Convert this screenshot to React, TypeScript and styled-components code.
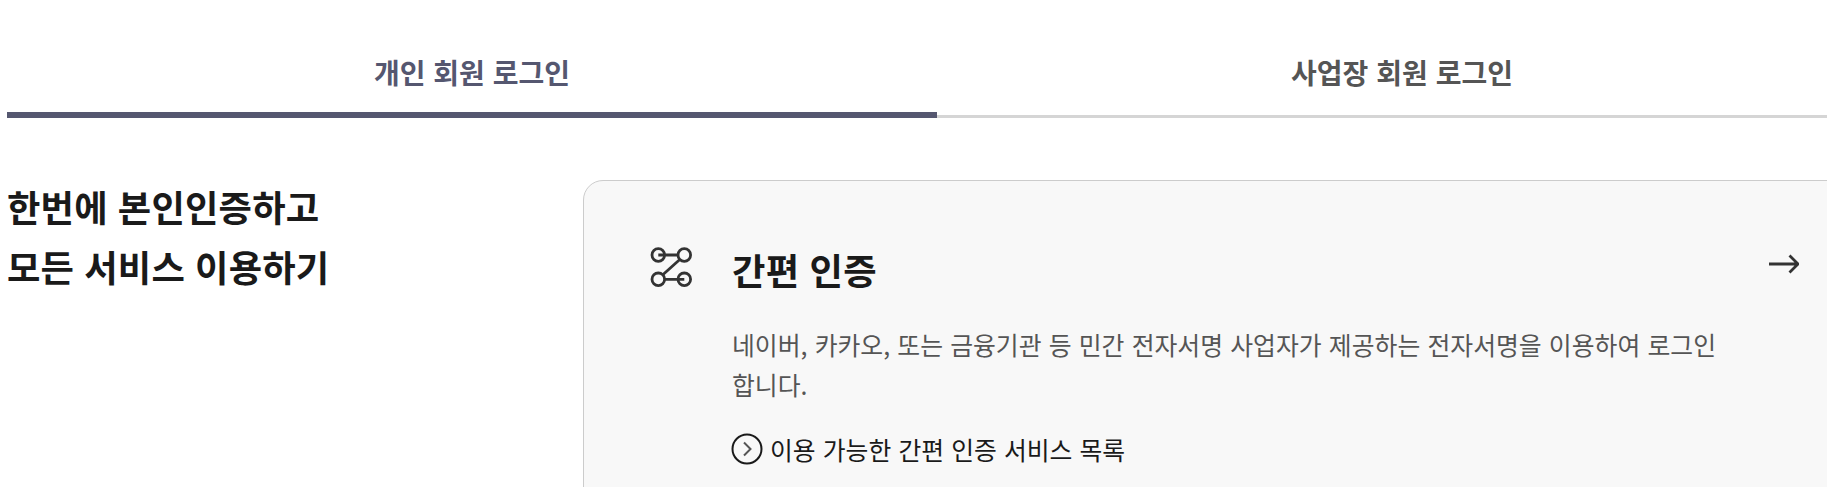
import React from 'react';
import styled, { createGlobalStyle } from 'styled-components';

const GlobalStyle = createGlobalStyle`
  html, body {
    margin: 0;
    padding: 0;
    height: 487px;
    overflow: hidden;
    background: #fff;
  }
  * { box-sizing: border-box; }
`;

const Page = styled.div`
  width: 1860px;
  height: 487px;
  overflow: hidden;
  margin-left: 7px;
  font-family: "Noto Sans CJK KR", "Noto Sans", sans-serif;
  word-spacing: 0.1em;
  word-break: keep-all;
`;

const Tabs = styled.div`
  display: flex;
  height: 118px;
`;

const Tab = styled.div<{ $active?: boolean }>`
  flex: 1;
  display: flex;
  justify-content: center;
  align-items: flex-start;
  padding-top: 50px;
  font-size: 28px;
  line-height: 44px;
  font-weight: 700;
  color: ${({ $active }) => ($active ? '#555770' : '#555555')};
  border-bottom: ${({ $active }) => ($active ? '6px solid #555770' : '3px solid #d5d5d5')};
`;

const Content = styled.div`
  display: flex;
  margin-top: 62px;
`;

const Heading = styled.h2`
  width: 576px;
  flex: none;
  margin: -4px 0 0;
  font-size: 36.3px;
  line-height: 60px;
  font-weight: 700;
  letter-spacing: 0.2px;
  color: #1a1a1a;
`;

const Card = styled.div`
  flex: 1;
  display: flex;
  min-height: 400px;
  padding: 64px 64px 64px 65px;
  border: 1px solid #cccccc;
  border-radius: 20px;
  background: #f8f8f8;
`;

const CardIcon = styled.svg`
  flex: none;
  width: 44px;
  height: 42px;
  margin: 2px 39px 0 0;
`;

const CardBody = styled.div`
  width: 1020px;
`;

const CardTitle = styled.h3`
  margin: -1px 0 30px;
  font-size: 36.3px;
  line-height: 50px;
  font-weight: 700;
  letter-spacing: 0.3px;
  color: #1a1a1a;
`;

const CardText = styled.p`
  margin: 0;
  font-size: 24.85px;
  line-height: 40px;
  font-weight: 400;
  color: #555555;
`;

const ServiceLink = styled.a`
  display: flex;
  align-items: center;
  gap: 7px;
  margin-top: 27px;
  font-size: 24.8px;
  line-height: 36px;
  color: #1a1a1a;
`;

const LinkIcon = styled.svg`
  flex: none;
  width: 32px;
  height: 32px;
  margin-left: -1px;
`;

const ArrowIcon = styled.svg`
  flex: none;
  width: 30px;
  height: 20px;
  margin: 9px 0 0 17px;
`;

export default function App() {
  return (
    <>
      <GlobalStyle />
      <Page>
        <Tabs>
          <Tab $active>개인 회원 로그인</Tab>
          <Tab>사업장 회원 로그인</Tab>
        </Tabs>
        <Content>
          <Heading>
            한번에 본인인증하고
            <br />
            모든 서비스 이용하기
          </Heading>
          <Card>
            <CardIcon viewBox="0 0 44 42" fill="none" stroke="#333" strokeWidth="2.8">
              <circle cx="9.3" cy="8" r="6.3" />
              <circle cx="35.3" cy="8" r="6.3" />
              <circle cx="9.3" cy="32.3" r="6.3" />
              <circle cx="35.3" cy="32.3" r="6.3" />
              <path d="M9.3 8H29M30.8 12.5L13.8 27.8M15.6 32.3H35.3" />
            </CardIcon>
            <CardBody>
              <CardTitle>간편 인증</CardTitle>
              <CardText>
                네이버, 카카오, 또는 금융기관 등 민간 전자서명 사업자가 제공하는 전자서명을 이용하여 로그인 합니다.
              </CardText>
              <ServiceLink>
                <LinkIcon viewBox="0 0 32 32" fill="none">
                  <circle cx="16" cy="16" r="14.5" stroke="#1a1a1a" strokeWidth="2" />
                  <path d="M13 9.5L19.5 16L13 22.5" stroke="#555" strokeWidth="2" />
                </LinkIcon>
                이용 가능한 간편 인증 서비스 목록
              </ServiceLink>
            </CardBody>
            <ArrowIcon viewBox="0 0 30 20" fill="none" stroke="#333" strokeWidth="2.8">
              <path d="M0 10H28M20.5 1.5L29 10L20.5 18.5" />
            </ArrowIcon>
          </Card>
        </Content>
      </Page>
    </>
  );
}
